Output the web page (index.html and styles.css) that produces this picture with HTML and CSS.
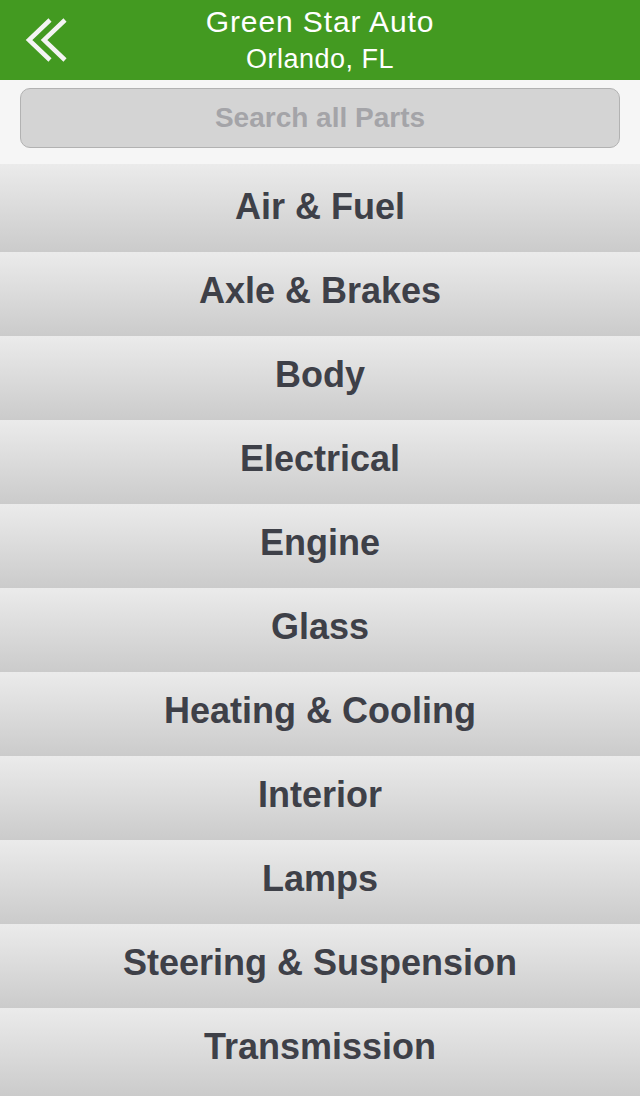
FILE: index.html
```html
<!DOCTYPE html>
<html lang="en">

<head>
    <meta charset="UTF-8">
    <meta name="viewport" content="width=device-width, initial-scale=1.0">
    <title>Green Star Auto - Parts</title>
    <link rel="stylesheet" href="styles.css">
</head>

<body>
    <div class="header">
        <a class="back" href="#">
            <svg width="80" height="80" viewBox="0 0 80 80">
                <polyline points="50,20 29,40 50,60" />
                <polyline points="65,20 44,40 65,60" />
            </svg>
        </a>
        <div class="title">
            <div class="name">Green Star Auto</div>
            <div class="city">Orlando, FL</div>
        </div>
        <div></div>
    </div>

    <div class="search-bar">
        <div class="search-box">Search all Parts</div>
    </div>

    <ul class="categories">
        <li>Air &amp; Fuel</li>
        <li>Axle &amp; Brakes</li>
        <li>Body</li>
        <li>Electrical</li>
        <li>Engine</li>
        <li>Glass</li>
        <li>Heating &amp; Cooling</li>
        <li>Interior</li>
        <li>Lamps</li>
        <li>Steering &amp; Suspension</li>
        <li>Transmission</li>
    </ul>
</body>

</html>
```

FILE: styles.css
```css
* {
    margin: 0;
    padding: 0;
    box-sizing: border-box;
}

body {
    font-family: "Liberation Sans", Arial, sans-serif;
    background-color: #f6f6f6;
}

.header {
    height: 80px;
    background-color: #439a21;
    display: grid;
    grid-template-columns: 80px 1fr 80px;
    color: #fff;
}

.back svg {
    display: block;
}

.back polyline {
    fill: none;
    stroke: #f4f4f4;
    stroke-width: 4.5;
}

.title {
    text-align: center;
    padding-top: 5px;
}

.name {
    font-size: 30px;
    line-height: 34px;
    letter-spacing: 0.9px;
}

.city {
    font-size: 27px;
    line-height: 40px;
    letter-spacing: 0.5px;
}

.search-bar {
    height: 84px;
    padding: 8px 20px 16px;
}

.search-box {
    height: 60px;
    border: 1px solid #b2b2b2;
    border-radius: 10px;
    background-color: #d4d4d4;
    color: #a4a4a8;
    font-size: 28px;
    font-weight: bold;
    line-height: 57px;
    text-align: center;
}

.categories {
    list-style: none;
}

.categories li {
    height: 84px;
    padding-bottom: 7px;
    line-height: 77px;
    text-align: center;
    font-size: 36px;
    font-weight: bold;
    color: #3e4048;
    background: linear-gradient(#ebebeb, #cbcbcb);
}

.categories li:first-child {
    height: 88px;
    padding-top: 4px;
}

.categories li:last-child {
    height: 88px;
    padding-bottom: 11px;
}
```
